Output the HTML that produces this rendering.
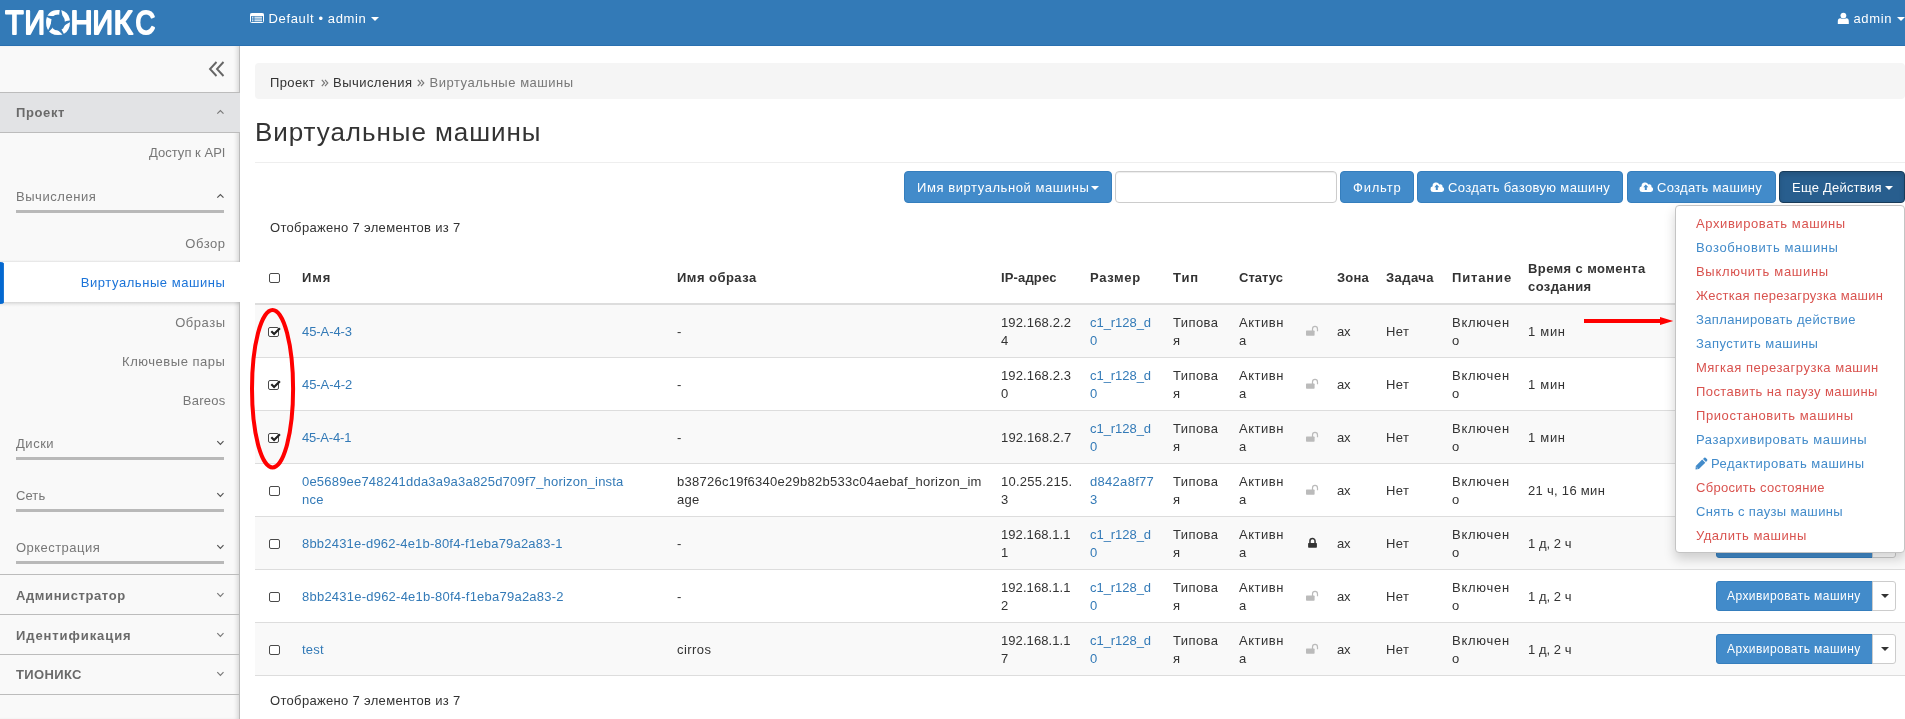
<!DOCTYPE html>
<html lang="ru">
<head>
<meta charset="utf-8">
<title>Виртуальные машины - ТИОНИКС</title>
<style>
*{box-sizing:border-box}
html,body{margin:0;padding:0}
body{width:1905px;height:719px;overflow:hidden;position:relative;background:#fff;
 font-family:"Liberation Sans","DejaVu Sans",sans-serif;font-size:13px;line-height:20px;color:#333}
a{color:#337ab7;text-decoration:none}
#wrap{position:absolute;left:0;top:0;width:1905px;height:719px;overflow:hidden;will-change:transform}
.abs{position:absolute}
.t{position:absolute;white-space:nowrap;line-height:20px}
i.car{display:inline-block;width:0;height:0;border-left:4px solid transparent;border-right:4px solid transparent;border-top:4px solid #fff;vertical-align:top}
#topbar{position:absolute;left:0;top:0;width:1905px;height:46px;background:#337ab7;color:#fff;border-bottom:1px solid #2a70b0}
#sidebar{position:absolute;left:0;top:46px;width:240px;height:673px;background:#f9f9f9;border-right:1px solid #bcbcbc;box-shadow:inset -4px 0 4px -2px rgba(0,0,0,.13)}
#sidebar .t{color:#777;margin-top:1px}
#sidebar .r{right:13.5px;text-align:right}
#sidebar .l{left:16px}
#sidebar .b{font-weight:bold;color:#6a6a6a}
#sidebar .ul{position:absolute;left:16px;width:208px;height:3px;background:#b9b9b9}
#sidebar .hl{position:absolute;left:0;width:239px;height:1px;background:#bcbcbc}
#crumb{position:absolute;left:255px;top:63px;width:1650px;height:36px;background:#f5f5f5;border-radius:4px}
.sep{position:absolute}
h1{position:absolute;left:255px;top:114px;margin:0;font-size:26px;line-height:36px;font-weight:normal;white-space:nowrap;color:#333}
.btn{position:absolute;height:32px;top:171px;border-radius:4px;background:#428bca;border:1px solid #357ebd;color:#fff}
.btn .t{top:6px}
#tbl{position:absolute;left:255px;top:251px;width:1650px;border-collapse:separate;border-spacing:0;table-layout:fixed}
#tbl th{height:54px;padding:1px 7px 0 9px;text-align:left;vertical-align:middle;font-weight:bold;border-bottom:2px solid #ddd;line-height:18px;white-space:nowrap}
#tbl td{height:53px;padding:1px 7px 0 9px;vertical-align:middle;border-bottom:1px solid #ddd;line-height:18px;white-space:nowrap}
#tbl tbody tr:nth-child(odd) td{background:#f9f9f9}
.cb{display:block;width:11px;height:10px;border:1px solid #4a4a4a;border-radius:2px;background:#fff;margin-left:5px;position:relative;top:0}
.cb svg{position:absolute;left:0px;top:-2px;overflow:visible}
.lk,.ulk{display:block;position:relative;top:-1px}
.lk{left:2px}
.ab{position:absolute;left:1716px;width:157px;height:30px;background:#428bca;border:1px solid #357ebd;border-radius:3px 0 0 3px;color:#fff;font-size:12px}
.ac{position:absolute;left:1872px;width:24px;height:30px;background:#fff;border:1px solid #ccc;border-radius:0 3px 3px 0}
.ac i{position:absolute;left:7.5px;top:12px;width:0;height:0;border-left:4px solid transparent;border-right:4px solid transparent;border-top:4px solid #333}
#menu{position:absolute;left:1675px;top:205px;width:230px;height:348px;background:#fff;border:1px solid #c4c4c4;border-radius:4px;box-shadow:0 6px 12px rgba(0,0,0,.175)}
#menu .t{left:20px}
#menu .r{color:#d9534f}
#menu .b{color:#428bca}
</style>
</head>
<body>
<div id="wrap">
<div id="topbar">
<svg class="abs" style="left:0;top:0" width="165" height="46" viewBox="0 0 165 46"><g fill="#fff" stroke="#fff" stroke-width="1.9" stroke-linejoin="round" font-family="Liberation Sans, sans-serif" font-weight="normal" font-size="35"><text transform="translate(5.31 34.05) scale(0.858 0.962)" vector-effect="non-scaling-stroke">Т</text><text transform="translate(24.41 34.05) scale(0.814 0.962)" vector-effect="non-scaling-stroke">И</text><text transform="translate(45.44 34.05) scale(0.920 0.962)" vector-effect="non-scaling-stroke">О</text><text transform="translate(70.44 34.05) scale(0.875 0.962)" vector-effect="non-scaling-stroke">Н</text><text transform="translate(92.41 34.05) scale(0.814 0.962)" vector-effect="non-scaling-stroke">И</text><text transform="translate(113.44 34.05) scale(0.945 0.962)" vector-effect="non-scaling-stroke">К</text><text transform="translate(135.57 34.05) scale(0.779 0.962)" vector-effect="non-scaling-stroke">С</text></g><path d="M59.93 9.25 L59.21 14.09 L59.80 19.53 L63.52 19.15 Q61.84 14.16 61.19 9.50 Z M71.17 20.29 L66.33 21.10 L61.35 23.35 L62.86 26.76 Q67.08 23.62 71.32 21.57 Z M64.14 34.39 L61.87 30.04 L58.19 25.99 L55.41 28.48 Q59.71 31.53 62.97 34.92 Z M48.56 32.06 L51.99 28.56 L54.70 23.81 L51.47 21.93 Q49.90 26.96 47.69 31.11 Z M45.96 16.52 L50.34 18.71 L55.70 19.82 L56.49 16.17 Q51.22 16.23 46.59 15.40 Z" fill="#337ab7"/></svg>
<svg class="abs" style="left:250px;top:13px" width="14" height="10" viewBox="0 0 14 10"><rect x=".5" y=".5" width="13" height="9" rx="1" fill="none" stroke="#fff" stroke-width="1"/><rect x=".5" y=".5" width="13" height="2.6" fill="#fff"/><path d="M2 4.3h1.4M4.4 4.3h7.6M2 6h1.4M4.4 6h7.6M2 7.7h1.4M4.4 7.7h7.6" stroke="#fff" stroke-width="1.1"/></svg>
<div class="t" style="left:268.5px;top:9px"><span style="letter-spacing:0.64px">Default • admin</span></div>
<i class="car abs" style="left:371px;top:17px"></i>
<svg class="abs" style="left:1837px;top:12px" width="12" height="12" viewBox="0 0 12 12"><circle cx="6.4" cy="3.6" r="2.9" fill="#fff"/><path d="M.8 11.9 V9.4 Q.8 6.3 3.4 6.3 Q6.4 7.6 9.4 6.3 Q11.8 6.3 11.8 9.4 V11.9 Z" fill="#fff"/></svg>
<div class="t" style="left:1853.5px;top:9px"><span style="letter-spacing:0.63px">admin</span></div>
<i class="car abs" style="left:1897px;top:17px"></i>
</div>
<div id="sidebar">
<svg class="abs" style="left:208px;top:14px" width="18" height="18" viewBox="0 0 18 18"><path d="M8.5 2 L2 9 L8.5 16 M15.5 2 L9 9 L15.5 16" fill="none" stroke="#666" stroke-width="1.9"/></svg>
<div class="hl" style="top:46px"></div>
<div class="abs" style="left:0;top:47px;width:240px;height:39px;background:#e2e3e5"></div>
<div class="hl" style="top:86px"></div>
<div class="t l b" style="top:56px"><span style="letter-spacing:0.63px">Проект</span></div>
<svg class="abs" style="left:215px;top:62px" width="10" height="8" viewBox="0 0 10 8"><path d="M2.3 5.6 L5.4 2.5 L8.5 5.6" fill="none" stroke="#7a7a7a" stroke-width="1.2"/></svg>
<div class="t r" style="top:96px"><span style="letter-spacing:0.03px">Доступ к API</span></div>
<div class="t l" style="top:140px"><span style="letter-spacing:0.55px">Вычисления</span></div>
<svg class="abs" style="left:215px;top:146px" width="10" height="8" viewBox="0 0 10 8"><path d="M2.3 5.6 L5.4 2.5 L8.5 5.6" fill="none" stroke="#555" stroke-width="1.2"/></svg>
<div class="ul" style="top:164px"></div>
<div class="t r" style="top:187px"><span style="letter-spacing:0.52px">Обзор</span></div>
<div class="abs" style="left:0;top:214px;width:239px;height:2px;background:linear-gradient(rgba(0,0,0,0),rgba(0,0,0,.09))"></div><div class="abs" style="left:0;top:216px;width:240px;height:40px;background:#fff"></div><div class="abs" style="left:0;top:256px;width:239px;height:5px;background:linear-gradient(rgba(0,0,0,.14),rgba(0,0,0,.03) 60%,rgba(0,0,0,0))"></div>
<svg class="abs" style="left:0;top:215.5px" width="5" height="42" viewBox="0 0 5 42"><path d="M0 0 L2.5 .3 L3.9 1.2 V40.8 L2.5 41.7 L0 42 Z" fill="#0468d0"/></svg>
<div class="t r" style="top:226px;color:#1a73d8"><span style="letter-spacing:0.56px">Виртуальные машины</span></div>
<div class="t r" style="top:266px"><span style="letter-spacing:0.52px">Образы</span></div>
<div class="t r" style="top:305px"><span style="letter-spacing:0.53px">Ключевые пары</span></div>
<div class="t r" style="top:344px"><span style="letter-spacing:0.27px">Bareos</span></div>
<div class="t l" style="top:387px"><span style="letter-spacing:0.53px">Диски</span></div>
<svg class="abs" style="left:215px;top:393px" width="10" height="8" viewBox="0 0 10 8"><path d="M2.3 2.2 L5.4 5.3 L8.5 2.2" fill="none" stroke="#555" stroke-width="1.2"/></svg>
<div class="ul" style="top:411px"></div>
<div class="t l" style="top:439px"><span style="letter-spacing:0.09px">Сеть</span></div>
<svg class="abs" style="left:215px;top:445px" width="10" height="8" viewBox="0 0 10 8"><path d="M2.3 2.2 L5.4 5.3 L8.5 2.2" fill="none" stroke="#555" stroke-width="1.2"/></svg>
<div class="ul" style="top:463px"></div>
<div class="t l" style="top:491px"><span style="letter-spacing:0.46px">Оркестрация</span></div>
<svg class="abs" style="left:215px;top:497px" width="10" height="8" viewBox="0 0 10 8"><path d="M2.3 2.2 L5.4 5.3 L8.5 2.2" fill="none" stroke="#555" stroke-width="1.2"/></svg>
<div class="ul" style="top:515px"></div>
<div class="hl" style="top:528px"></div>
<div class="t l b" style="top:539px"><span style="letter-spacing:0.6px">Администратор</span></div>
<svg class="abs" style="left:215px;top:545px" width="10" height="8" viewBox="0 0 10 8"><path d="M2.3 2.2 L5.4 5.3 L8.5 2.2" fill="none" stroke="#7a7a7a" stroke-width="1.2"/></svg>
<div class="hl" style="top:568px"></div>
<div class="t l b" style="top:579px"><span style="letter-spacing:0.91px">Идентификация</span></div>
<svg class="abs" style="left:215px;top:585px" width="10" height="8" viewBox="0 0 10 8"><path d="M2.3 2.2 L5.4 5.3 L8.5 2.2" fill="none" stroke="#7a7a7a" stroke-width="1.2"/></svg>
<div class="hl" style="top:608px"></div>
<div class="t l b" style="top:618px"><span style="letter-spacing:0.36px">ТИОНИКС</span></div>
<svg class="abs" style="left:215px;top:624px" width="10" height="8" viewBox="0 0 10 8"><path d="M2.3 2.2 L5.4 5.3 L8.5 2.2" fill="none" stroke="#7a7a7a" stroke-width="1.2"/></svg>
<div class="hl" style="top:648px"></div>
</div>
<div id="crumb">
<div class="t" style="left:15px;top:10px"><span style="letter-spacing:0.36px">Проект</span></div>
<svg class="sep" style="left:65.5px;top:16px" width="8" height="8" viewBox="0 0 8 8"><path d="M.8 .8 L3.6 4 L.8 7.2 M4 .8 L6.8 4 L4 7.2" fill="none" stroke="#777" stroke-width="1.15"/></svg>
<div class="t" style="left:78px;top:10px"><span style="letter-spacing:0.46px">Вычисления</span></div>
<svg class="sep" style="left:162px;top:16px" width="8" height="8" viewBox="0 0 8 8"><path d="M.8 .8 L3.6 4 L.8 7.2 M4 .8 L6.8 4 L4 7.2" fill="none" stroke="#777" stroke-width="1.15"/></svg>
<div class="t" style="left:174.5px;top:10px;color:#777"><span style="letter-spacing:0.53px">Виртуальные машины</span></div>
</div>
<h1><span style="letter-spacing:0.95px">Виртуальные машины</span></h1>
<div class="abs" style="left:255px;top:162px;width:1650px;height:1px;background:#eee"></div>
<div class="btn" style="left:904px;width:208px"><div class="t" style="left:12px"><span style="letter-spacing:0.57px">Имя виртуальной машины</span></div><i class="car abs" style="left:186px;top:14px"></i></div>
<div class="abs" style="left:1115px;top:171px;width:222px;height:32px;border:1px solid #ccc;border-radius:4px;background:#fff;box-shadow:inset 0 1px 1px rgba(0,0,0,.075)"></div>
<div class="btn" style="left:1340px;width:74px"><div class="t" style="left:12px"><span style="letter-spacing:0.79px">Фильтр</span></div></div>
<div class="btn" style="left:1417px;width:206px"><svg class="abs" style="left:12px;top:9px" width="15" height="12" viewBox="0 0 15 12"><path d="M3.2 11 A2.9 2.9 0 0 1 2.6 5.3 A3.5 3.5 0 0 1 9.3 3.6 A2.15 2.15 0 0 1 12.5 6 A2.6 2.6 0 0 1 11.8 11 Z" fill="#fff"/><path d="M6.8 3.6 L9.3 6.3 H7.8 V9 H5.8 V6.3 H4.3 Z" fill="#428bca"/></svg><div class="t" style="left:30px"><span style="letter-spacing:0.35px">Создать базовую машину</span></div></div>
<div class="btn" style="left:1627px;width:149px"><svg class="abs" style="left:11px;top:9px" width="15" height="12" viewBox="0 0 15 12"><path d="M3.2 11 A2.9 2.9 0 0 1 2.6 5.3 A3.5 3.5 0 0 1 9.3 3.6 A2.15 2.15 0 0 1 12.5 6 A2.6 2.6 0 0 1 11.8 11 Z" fill="#fff"/><path d="M6.8 3.6 L9.3 6.3 H7.8 V9 H5.8 V6.3 H4.3 Z" fill="#428bca"/></svg><div class="t" style="left:29px"><span style="letter-spacing:0.32px">Создать машину</span></div></div>
<div class="btn" style="left:1779px;width:126px;background:#285e8e;border-color:#193c5a;box-shadow:inset 0 3px 5px rgba(0,0,0,.125)"><div class="t" style="left:12px"><span style="letter-spacing:0.22px">Еще Действия</span></div><i class="car abs" style="left:105px;top:14px"></i></div>
<div class="t" style="left:270px;top:218px"><span style="letter-spacing:0.32px">Отображено 7 элементов из 7</span></div>
<table id="tbl">
<colgroup><col style="width:38px"><col style="width:375px"><col style="width:324px"><col style="width:89px"><col style="width:83px"><col style="width:66px"><col style="width:67px"><col style="width:31px"><col style="width:49px"><col style="width:66px"><col style="width:76px"><col style="width:160px"><col></colgroup>
<thead><tr><th><span class="cb"></span></th><th><span style="letter-spacing:0.95px">Имя</span></th><th><span style="letter-spacing:0.47px">Имя образа</span></th><th><span style="letter-spacing:0.15px">IP-адрес</span></th><th><span style="letter-spacing:0.67px">Размер</span></th><th><span style="letter-spacing:0.95px">Тип</span></th><th><span style="letter-spacing:0.04px">Статус</span></th><th></th><th><span style="letter-spacing:0.17px">Зона</span></th><th><span style="letter-spacing:0.43px">Задача</span></th><th><span style="letter-spacing:0.86px">Питание</span></th><th><span style="letter-spacing:0.4px">Время с момента<br>создания</span></th><th></th></tr></thead>
<tbody>
<tr><td><span class="cb" style="left:-1px"><svg viewBox="0 0 12 12" width="12" height="12"><path d="M2.3 5.2 L5.1 8 L10.9 2.2" fill="none" stroke="#222" stroke-width="2.2"/></svg></span></td><td><a><span style="letter-spacing:-0.07px">45-A-4-3</span></a></td><td>-</td><td><span style="letter-spacing:0.14px">192.168.2.2<br>4</span></td><td><a><span style="letter-spacing:-0.05px">c1_r128_d<br>0</span></a></td><td><span style="letter-spacing:0.41px">Типова<br>я</span></td><td><span style="letter-spacing:0.51px">Активн<br>а</span></td><td><svg class="ulk" width="14" height="12" viewBox="0 0 14 12"><rect x="0" y="5.6" width="8.6" height="5.2" rx=".7" fill="#bbb"/><path d="M6.5 6 V3.9 A2.5 2.5 0 0 1 11.5 3.9 V6.2" fill="none" stroke="#bbb" stroke-width="1.2"/></svg></td><td><span style="letter-spacing:-0.2px">ax</span></td><td><span style="letter-spacing:0.36px">Нет</span></td><td><span style="letter-spacing:0.74px">Включен<br>о</span></td><td><span style="letter-spacing:0.7px">1 мин</span></td><td></td></tr>
<tr><td><span class="cb" style="left:-1px"><svg viewBox="0 0 12 12" width="12" height="12"><path d="M2.3 5.2 L5.1 8 L10.9 2.2" fill="none" stroke="#222" stroke-width="2.2"/></svg></span></td><td><a><span style="letter-spacing:-0.06px">45-A-4-2</span></a></td><td>-</td><td><span style="letter-spacing:0.13px">192.168.2.3<br>0</span></td><td><a><span style="letter-spacing:-0.05px">c1_r128_d<br>0</span></a></td><td><span style="letter-spacing:0.41px">Типова<br>я</span></td><td><span style="letter-spacing:0.51px">Активн<br>а</span></td><td><svg class="ulk" width="14" height="12" viewBox="0 0 14 12"><rect x="0" y="5.6" width="8.6" height="5.2" rx=".7" fill="#bbb"/><path d="M6.5 6 V3.9 A2.5 2.5 0 0 1 11.5 3.9 V6.2" fill="none" stroke="#bbb" stroke-width="1.2"/></svg></td><td><span style="letter-spacing:-0.2px">ax</span></td><td><span style="letter-spacing:0.36px">Нет</span></td><td><span style="letter-spacing:0.74px">Включен<br>о</span></td><td><span style="letter-spacing:0.7px">1 мин</span></td><td></td></tr>
<tr><td><span class="cb" style="left:-1px"><svg viewBox="0 0 12 12" width="12" height="12"><path d="M2.3 5.2 L5.1 8 L10.9 2.2" fill="none" stroke="#222" stroke-width="2.2"/></svg></span></td><td><a><span style="letter-spacing:-0.17px">45-A-4-1</span></a></td><td>-</td><td><span style="letter-spacing:0.15px">192.168.2.7</span></td><td><a><span style="letter-spacing:-0.05px">c1_r128_d<br>0</span></a></td><td><span style="letter-spacing:0.41px">Типова<br>я</span></td><td><span style="letter-spacing:0.51px">Активн<br>а</span></td><td><svg class="ulk" width="14" height="12" viewBox="0 0 14 12"><rect x="0" y="5.6" width="8.6" height="5.2" rx=".7" fill="#bbb"/><path d="M6.5 6 V3.9 A2.5 2.5 0 0 1 11.5 3.9 V6.2" fill="none" stroke="#bbb" stroke-width="1.2"/></svg></td><td><span style="letter-spacing:-0.2px">ax</span></td><td><span style="letter-spacing:0.36px">Нет</span></td><td><span style="letter-spacing:0.74px">Включен<br>о</span></td><td><span style="letter-spacing:0.7px">1 мин</span></td><td></td></tr>
<tr><td><span class="cb"></span></td><td><a><span style="letter-spacing:0.2px">0e5689ee748241dda3a9a3a825d709f7_horizon_insta<br>nce</span></a></td><td><span style="letter-spacing:0.26px">b38726c19f6340e29b82b533c04aebaf_horizon_im<br>age</span></td><td><span style="letter-spacing:0.25px">10.255.215.<br>3</span></td><td><a><span style="letter-spacing:0.3px">d842a8f77<br>3</span></a></td><td><span style="letter-spacing:0.41px">Типова<br>я</span></td><td><span style="letter-spacing:0.51px">Активн<br>а</span></td><td><svg class="ulk" width="14" height="12" viewBox="0 0 14 12"><rect x="0" y="5.6" width="8.6" height="5.2" rx=".7" fill="#bbb"/><path d="M6.5 6 V3.9 A2.5 2.5 0 0 1 11.5 3.9 V6.2" fill="none" stroke="#bbb" stroke-width="1.2"/></svg></td><td><span style="letter-spacing:-0.2px">ax</span></td><td><span style="letter-spacing:0.36px">Нет</span></td><td><span style="letter-spacing:0.74px">Включен<br>о</span></td><td><span style="letter-spacing:0.3px">21 ч, 16 мин</span></td><td></td></tr>
<tr><td><span class="cb"></span></td><td><a><span style="letter-spacing:0.2px">8bb2431e-d962-4e1b-80f4-f1eba79a2a83-1</span></a></td><td>-</td><td><span style="letter-spacing:0.07px">192.168.1.1<br>1</span></td><td><a><span style="letter-spacing:-0.05px">c1_r128_d<br>0</span></a></td><td><span style="letter-spacing:0.41px">Типова<br>я</span></td><td><span style="letter-spacing:0.51px">Активн<br>а</span></td><td><svg class="lk" width="10" height="12" viewBox="0 0 10 12"><rect x=".1" y="6" width="8.8" height="4.8" rx=".7" fill="#333"/><path d="M1.95 6.4 V4.1 A2.55 2.55 0 0 1 7.05 4.1 V6.4" fill="none" stroke="#333" stroke-width="1.5"/></svg></td><td><span style="letter-spacing:-0.2px">ax</span></td><td><span style="letter-spacing:0.36px">Нет</span></td><td><span style="letter-spacing:0.74px">Включен<br>о</span></td><td><span style="letter-spacing:0.04px">1 д, 2 ч</span></td><td></td></tr>
<tr><td><span class="cb"></span></td><td><a><span style="letter-spacing:0.23px">8bb2431e-d962-4e1b-80f4-f1eba79a2a83-2</span></a></td><td>-</td><td><span style="letter-spacing:0.07px">192.168.1.1<br>2</span></td><td><a><span style="letter-spacing:-0.05px">c1_r128_d<br>0</span></a></td><td><span style="letter-spacing:0.41px">Типова<br>я</span></td><td><span style="letter-spacing:0.51px">Активн<br>а</span></td><td><svg class="ulk" width="14" height="12" viewBox="0 0 14 12"><rect x="0" y="5.6" width="8.6" height="5.2" rx=".7" fill="#bbb"/><path d="M6.5 6 V3.9 A2.5 2.5 0 0 1 11.5 3.9 V6.2" fill="none" stroke="#bbb" stroke-width="1.2"/></svg></td><td><span style="letter-spacing:-0.2px">ax</span></td><td><span style="letter-spacing:0.36px">Нет</span></td><td><span style="letter-spacing:0.74px">Включен<br>о</span></td><td><span style="letter-spacing:0.04px">1 д, 2 ч</span></td><td></td></tr>
<tr><td><span class="cb"></span></td><td><a><span style="letter-spacing:0.18px">test</span></a></td><td><span style="letter-spacing:0.42px">cirros</span></td><td><span style="letter-spacing:0.07px">192.168.1.1<br>7</span></td><td><a><span style="letter-spacing:-0.05px">c1_r128_d<br>0</span></a></td><td><span style="letter-spacing:0.41px">Типова<br>я</span></td><td><span style="letter-spacing:0.51px">Активн<br>а</span></td><td><svg class="ulk" width="14" height="12" viewBox="0 0 14 12"><rect x="0" y="5.6" width="8.6" height="5.2" rx=".7" fill="#bbb"/><path d="M6.5 6 V3.9 A2.5 2.5 0 0 1 11.5 3.9 V6.2" fill="none" stroke="#bbb" stroke-width="1.2"/></svg></td><td><span style="letter-spacing:-0.2px">ax</span></td><td><span style="letter-spacing:0.36px">Нет</span></td><td><span style="letter-spacing:0.74px">Включен<br>о</span></td><td><span style="letter-spacing:0.04px">1 д, 2 ч</span></td><td></td></tr>
</tbody></table>
<div class="t" style="left:270px;top:691px"><span style="letter-spacing:0.32px">Отображено 7 элементов из 7</span></div>
<div class="ab" style="top:528px"><div class="t" style="left:10px;top:4px"><span style="letter-spacing:0.44px">Архивировать машину</span></div></div><div class="ac" style="top:528px"><i></i></div>
<div class="ab" style="top:581px"><div class="t" style="left:10px;top:4px"><span style="letter-spacing:0.44px">Архивировать машину</span></div></div><div class="ac" style="top:581px"><i></i></div>
<div class="ab" style="top:634px"><div class="t" style="left:10px;top:4px"><span style="letter-spacing:0.44px">Архивировать машину</span></div></div><div class="ac" style="top:634px"><i></i></div>
<div id="menu">
<div class="t r" style="top:8px"><span style="letter-spacing:0.59px">Архивировать машины</span></div>
<div class="t b" style="top:32px"><span style="letter-spacing:0.61px">Возобновить машины</span></div>
<div class="t r" style="top:56px"><span style="letter-spacing:0.7px">Выключить машины</span></div>
<div class="t r" style="top:80px"><span style="letter-spacing:0.31px">Жесткая перезагрузка машин</span></div>
<div class="t b" style="top:104px"><span style="letter-spacing:0.36px">Запланировать действие</span></div>
<div class="t b" style="top:128px"><span style="letter-spacing:0.47px">Запустить машины</span></div>
<div class="t r" style="top:152px"><span style="letter-spacing:0.5px">Мягкая перезагрузка машин</span></div>
<div class="t r" style="top:176px"><span style="letter-spacing:0.41px">Поставить на паузу машины</span></div>
<div class="t r" style="top:200px"><span style="letter-spacing:0.59px">Приостановить машины</span></div>
<div class="t b" style="top:224px"><span style="letter-spacing:0.58px">Разархивировать машины</span></div>
<div class="t b" style="top:248px"><svg class="abs" style="left:-1px;top:3px" width="13" height="13" viewBox="0 0 13 13"><path d="M.5 12.4 L.8 9 L7.2 2.6 L10.3 5.7 L3.9 12.1 Z M8 1.9 L9.2 .7 Q9.9 .2 10.6 .8 L12.1 2.3 Q12.7 3 12.1 3.7 L11 4.9 Z" fill="#428bca"/><path d="M1.7 10.4 L2.5 11.2" stroke="#fff" stroke-width=".9"/></svg><span style="margin-left:15px"><span style="letter-spacing:0.49px">Редактировать машины</span></span></div>
<div class="t r" style="top:272px"><span style="letter-spacing:0.29px">Сбросить состояние</span></div>
<div class="t b" style="top:296px"><span style="letter-spacing:0.35px">Снять с паузы машины</span></div>
<div class="t r" style="top:320px"><span style="letter-spacing:0.52px">Удалить машины</span></div>
</div>
<svg class="abs" style="left:240px;top:300px;overflow:visible" width="70" height="180"><ellipse cx="32.55" cy="88.75" rx="20.55" ry="78.75" fill="none" stroke="#f00" stroke-width="4"/></svg>
<svg class="abs" style="left:1580px;top:310px" width="100" height="22"><path d="M4 9 H80 V7 L93.3 11 L80 15 V13 H4 Z" fill="#f00"/></svg>
</div>
</body>
</html>
